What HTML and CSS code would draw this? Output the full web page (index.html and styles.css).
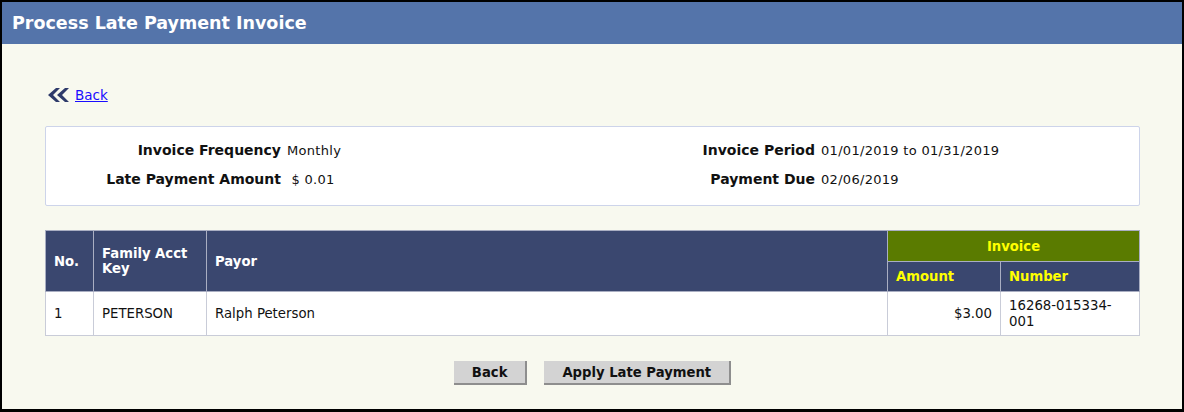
FILE: index.html
```html
<!DOCTYPE html>
<html lang="en">
<head>
    <meta charset="UTF-8">
    <meta name="viewport" content="width=device-width, initial-scale=1.0">
    <title>Process Late Payment Invoice</title>
    <link rel="stylesheet" href="styles.css">
</head>
<body>
    <div class="window">
        <div class="page-title">
            <h1>Process Late Payment Invoice</h1>
        </div>
        <div class="page-body">
            <div class="back-link">
                <svg class="back-icon" width="21" height="14" viewBox="0 0 21 14">
                    <path d="M8 0 L0 7 L8 14 L12 14 L5 7 L12 0 Z" fill="#2e3a6a"/>
                    <path d="M17 0 L9 7 L17 14 L21 14 L14 7 L21 0 Z" fill="#2e3a6a"/>
                </svg>
                <a href="#">Back</a>
            </div>

            <div class="info-box">
                <div class="info-label">Invoice Frequency</div>
                <div class="info-value">Monthly</div>
                <div class="info-label">Invoice Period</div>
                <div class="info-value">01/01/2019 to 01/31/2019</div>
                <div class="info-label">Late Payment Amount</div>
                <div class="info-value">&nbsp;$ 0.01</div>
                <div class="info-label">Payment Due</div>
                <div class="info-value">02/06/2019</div>
            </div>

            <table class="grid">
                <thead>
                    <tr>
                        <th class="col-no" rowspan="2">No.</th>
                        <th class="col-key" rowspan="2">Family Acct Key</th>
                        <th class="col-payor" rowspan="2">Payor</th>
                        <th class="group" colspan="2">Invoice</th>
                    </tr>
                    <tr>
                        <th class="col-amount sub">Amount</th>
                        <th class="col-number sub">Number</th>
                    </tr>
                </thead>
                <tbody>
                    <tr>
                        <td>1</td>
                        <td>PETERSON</td>
                        <td>Ralph Peterson</td>
                        <td class="num">$3.00</td>
                        <td>16268-015334-001</td>
                    </tr>
                </tbody>
            </table>

            <div class="actions">
                <button>Back</button>
                <button>Apply Late Payment</button>
            </div>
        </div>
    </div>
</body>
</html>
```

FILE: styles.css
```css
html {
    box-sizing: border-box;
}

*, *::before, *::after {
    box-sizing: inherit;
}

body {
    margin: 0;
    background: #000;
    font-family: "DejaVu Sans", Verdana, sans-serif;
    color: #111;
}

.window {
    margin: 2px 2px 0 2px;
    height: 407px;
    background: #f8f9ef;
    display: flex;
    flex-direction: column;
}

.page-title {
    background: #5474aa;
    height: 42px;
    display: flex;
    align-items: center;
    padding-left: 10px;
}

.page-title h1 {
    margin: 0;
    color: #fff;
    font-size: 17.5px;
    font-weight: bold;
}

.page-body {
    padding: 0 42px 0 43px;
}

.back-link {
    display: flex;
    align-items: center;
    gap: 6px;
    margin: 42px 0 0 3px;
    height: 18px;
}

.back-link a {
    color: #1a0dff;
    font-size: 13.5px;
}

.info-box {
    margin-top: 22px;
    background: #fff;
    border: 1px solid #cdd4ea;
    border-radius: 2px;
    height: 80px;
    padding-top: 8px;
    display: grid;
    grid-template-columns: 241px 310px 224px 1fr;
    grid-auto-rows: 29px;
    align-content: start;
    align-items: center;
}

.info-label {
    font-size: 14px;
    font-weight: bold;
    text-align: right;
    padding-right: 6px;
}

.info-value {
    font-size: 13px;
    letter-spacing: 0.3px;
    padding-top: 1px;
}

.grid {
    margin-top: 24px;
    width: 100%;
    border-collapse: collapse;
    font-size: 13.3px;
    background: #fff;
    border: 1px solid #9a9fb4;
}

.grid th {
    background: #3a476f;
    color: #fff;
    font-size: 13.2px;
    text-align: left;
    padding: 2px 8px;
    border: 1px solid #a9aec2;
    line-height: 15px;
}

.grid th.group {
    background: #5a7b00;
    color: #ffff00;
    text-align: center;
    height: 31px;
}

.grid th.sub {
    color: #ffff00;
    height: 30px;
}

.grid td {
    padding: 3px 8px;
    border: 1px solid #c9ccd8;
    height: 44px;
    line-height: 16px;
}

.grid td.num {
    text-align: right;
}

.col-no { width: 48px; }
.col-key { width: 113px; }
.col-amount { width: 113px; }
.col-number { width: 139px; }

.actions {
    display: flex;
    justify-content: center;
    gap: 17px;
    margin-top: 25px;
}

.actions button {
    font-family: "DejaVu Sans", Verdana, sans-serif;
    font-size: 13.2px;
    font-weight: bold;
    color: #111;
    background: #d3d3d3;
    border: none;
    border-right: 2px solid #8e8e8e;
    border-bottom: 2px solid #8e8e8e;
    height: 24px;
    padding: 0 18px;
    cursor: pointer;
}
```
